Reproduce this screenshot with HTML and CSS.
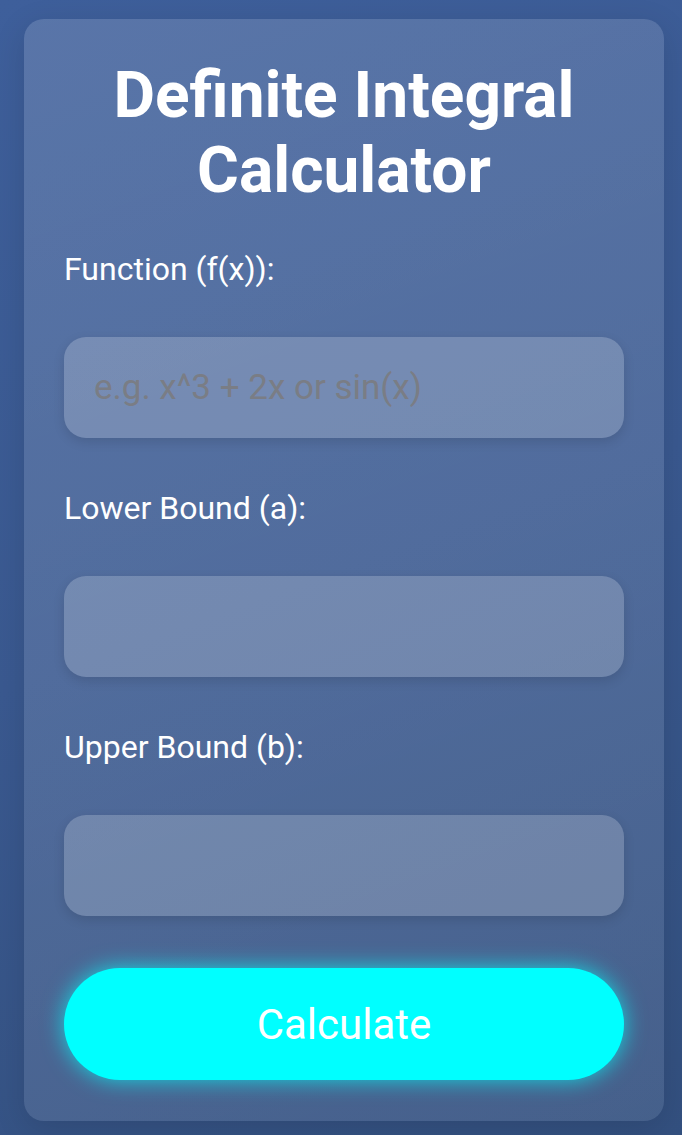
FILE: index.html
```html
<!DOCTYPE html>
<html lang="en">
<head>
<meta charset="utf-8">
<title>Definite Integral Calculator</title>
<link rel="stylesheet" href="styles.css">
</head>
<body>
<main class="card">
  <h1 class="title">Definite Integral Calculator</h1>
  <div class="field">
    <label class="label" for="fn">Function (f(x)):</label>
    <input class="input" id="fn" type="text" placeholder="e.g. x^3 + 2x or sin(x)">
  </div>
  <div class="field">
    <label class="label" for="lo">Lower Bound (a):</label>
    <input class="input" id="lo" type="text">
  </div>
  <div class="field">
    <label class="label" for="hi">Upper Bound (b):</label>
    <input class="input" id="hi" type="text">
  </div>
  <button class="btn" type="button">Calculate</button>
</main>
</body>
</html>
```
FILE: styles.css
```css
* { box-sizing: border-box; }
html, body { height: 100%; }
body {
  margin: 0;
  font-family: Roboto, "Noto Sans", sans-serif;
  background: linear-gradient(160deg, #3e5f9b 0%, #3a5990 50%, #33507f 100%);
  padding: 19px 18px 14px 24px;
}
.card {
  display: flex;
  flex-direction: column;
  width: 640px;
  padding: 39px 40px 41px;
  border-radius: 20px;
  background: linear-gradient(160deg, rgba(255,255,255,0.14), rgba(255,255,255,0.09));
  box-shadow: 0 8px 32px rgba(0,0,0,0.12);
}
.title {
  margin: 0 0 42px;
  font-size: 64px;
  line-height: 75px;
  font-weight: 700;
  color: #fff;
  text-align: center;
}
.field {
  display: flex;
  flex-direction: column;
}
.label {
  font-size: 32px;
  line-height: 38px;
  color: #fff;
  margin-bottom: 49px;
}
.input {
  flex-shrink: 0;
  height: 101px;
  border: none;
  border-radius: 22px;
  padding: 0 30px;
  font-family: inherit;
  font-size: 35px;
  color: #333;
  background: rgba(255,255,255,0.2);
  box-shadow: 0 4px 12px rgba(0,0,0,0.12);
  margin-bottom: 51px;
  outline: none;
}
.input::placeholder { color: #7a7d85; }
.field:last-of-type .input { margin-bottom: 52px; }
.btn {
  flex-shrink: 0;
  height: 112px;
  border: none;
  border-radius: 56px;
  background: #00ffff;
  color: #fff;
  font-family: inherit;
  font-size: 42px;
  box-shadow: 0 0 22px rgba(0,255,255,0.75);
}
```
